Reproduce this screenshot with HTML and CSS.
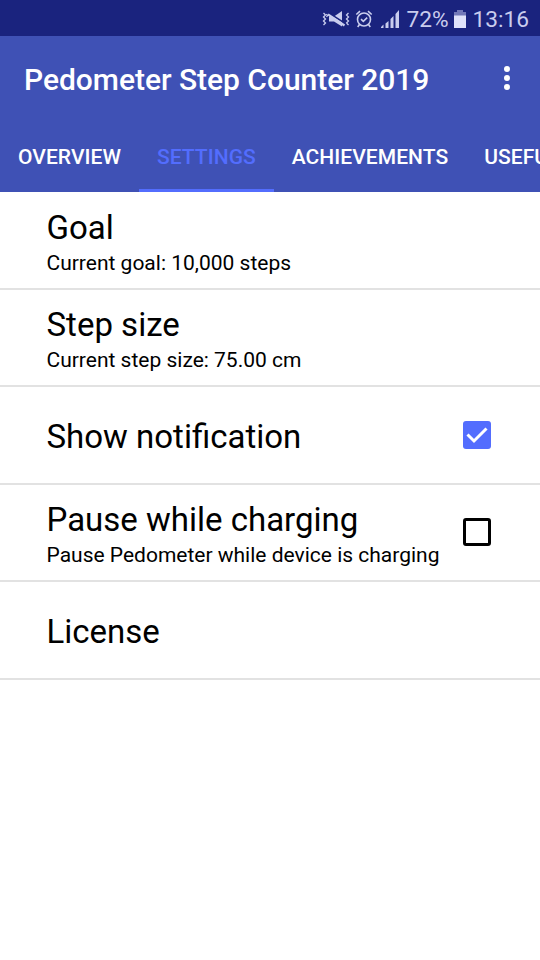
FILE: index.html
```html
<!DOCTYPE html>
<html lang="en">

<head>
    <meta charset="UTF-8">
    <meta name="viewport" content="width=device-width, initial-scale=1.0">
    <title>Pedometer Step Counter 2019</title>
    <link rel="stylesheet" href="styles.css">
</head>

<body>

    <div class="status-bar">
        <!-- Vibrate / muted -->
        <svg class="icon-mute" width="28" height="18" viewBox="0 0 28 18">
            <path d="M1.500 3l2 2-2 2 2 2-2 2 2 2-2 2M4.500 4l1 1.500-1 1.500M26.500 3l-2 2 2 2-2 2 2 2-2 2 2 2" fill="none" stroke="#c9cdee" stroke-width="1.300"/>
            <path d="M7 6.500h5L20 1v15.500L12 11.500H7z" fill="#c9cdee"/>
            <path d="M6 2.500L24 14" stroke="#1a237e" stroke-width="1.500"/>
            <path d="M6 4.300L22.500 15.500" stroke="#c9cdee" stroke-width="2.200"/>
        </svg>
        <!-- Alarm -->
        <svg class="icon-alarm" width="18" height="18" viewBox="0 0 18 18" fill="none" stroke="#c9cdee" stroke-width="1.600">
            <circle cx="9" cy="9.500" r="6.500"/>
            <path d="M1.300 4.500l3.700-3.300M16.700 4.500l-3.700-3.300M4.500 14.500l-1.800 2.500M13.500 14.500l1.800 2.500M6 9.200l2.300 2.200 3.900-3.700"/>
        </svg>
        <!-- Signal -->
        <svg class="icon-signal" width="18" height="18" viewBox="0 0 18 18" fill="#c9cdee">
            <path d="M0 17l2.500-2.500V18H0zM4.500 13.500L7.500 11v7h-3zM9.500 9l3-3v12h-3zM14.500 4L18 0v18h-3.500z"/>
        </svg>
        <span class="battery-text">72%</span>
        <!-- Battery -->
        <svg class="icon-battery" width="12" height="18" viewBox="0 0 12 18">
            <path d="M3 0h6v2h3v4H0V2h3z" fill="#7278b8"/>
            <path d="M0 5.500h12V18H0z" fill="#dfe2fa"/>
        </svg>
        <span class="clock">13:16</span>
    </div>

    <div class="app-bar">
        <div class="toolbar">
            <h1>Pedometer Step Counter 2019</h1>
            <div class="menu-button">
                <span></span>
                <span></span>
                <span></span>
            </div>
        </div>
        <div class="tabs">
            <div class="tab">OVERVIEW</div>
            <div class="tab active">SETTINGS</div>
            <div class="tab">ACHIEVEMENTS</div>
            <div class="tab">USEFUL</div>
        </div>
    </div>

    <div class="settings">
        <div class="setting">
            <div class="setting-text">
                <div class="setting-title">Goal</div>
                <div class="setting-summary">Current goal: 10,000 steps</div>
            </div>
        </div>
        <div class="setting">
            <div class="setting-text">
                <div class="setting-title">Step size</div>
                <div class="setting-summary">Current step size: 75.00 cm</div>
            </div>
        </div>
        <div class="setting">
            <div class="setting-text">
                <div class="setting-title">Show notification</div>
            </div>
            <div class="checkbox checked">
                <svg width="28" height="28" viewBox="0 0 28 28">
                    <path d="M4.500 13.500l6.500 6.500L23.500 7.500" fill="none" stroke="#fff" stroke-width="3"/>
                </svg>
            </div>
        </div>
        <div class="setting">
            <div class="setting-text">
                <div class="setting-title">Pause while charging</div>
                <div class="setting-summary">Pause Pedometer while device is charging</div>
            </div>
            <div class="checkbox"></div>
        </div>
        <div class="setting">
            <div class="setting-text">
                <div class="setting-title">License</div>
            </div>
        </div>
    </div>

</body>

</html>
```

FILE: styles.css
```css
body {
    margin: 0;
    font-family: Roboto, sans-serif;
    background-color: #fff;
    color: #000;
    overflow: hidden;
}

.status-bar {
    display: flex;
    align-items: center;
    justify-content: flex-end;
    height: 36px;
    padding: 2px 11px 0 0;
    box-sizing: border-box;
    background-color: #1a237e;
    color: #c9cdee;
    font-size: 22.7px;
    line-height: 34px;
}

.status-bar span {
    padding-top: 1px;
}

.icon-mute {
    margin-right: 5px;
}

.icon-alarm {
    margin-right: 8px;
}

.icon-signal {
    margin-right: 7px;
}

.icon-battery {
    margin: 0 7px 0 5px;
}

.app-bar {
    height: 156px;
    background-color: #3f51b5;
    color: #fff;
}

.toolbar {
    display: flex;
    align-items: center;
    justify-content: space-between;
    height: 84px;
    padding: 0 30px 0 24px;
}

.toolbar h1 {
    margin: 2px 0 0;
    font-size: 30px;
    font-weight: 500;
    letter-spacing: -0.03px;
}

.menu-button {
    display: flex;
    flex-direction: column;
    gap: 3px;
}

.menu-button span {
    width: 6px;
    height: 6px;
    border-radius: 50%;
    background-color: #fff;
}

.tabs {
    display: flex;
    height: 72px;
    overflow: hidden;
}

.tab {
    flex-shrink: 0;
    padding: 1px 18px 0;
    box-sizing: border-box;
    border-bottom: 3px solid transparent;
    font-size: 21px;
    font-weight: 500;
    letter-spacing: 0.05px;
    line-height: 72px;
}

.tab.active {
    color: #536dfe;
    border-bottom-color: #536dfe;
}

.setting {
    display: flex;
    align-items: center;
    justify-content: space-between;
    height: 97.5px;
    padding: 0 49px 0 46.5px;
    box-sizing: border-box;
    border-bottom: 2px solid #e2e2e2;
}

.setting-text {
    padding-top: 3px;
    white-space: nowrap;
}

.setting-title {
    font-size: 33px;
    line-height: 39px;
}

.setting-summary {
    font-size: 21px;
    line-height: 25px;
    padding-top: 4px;
    margin-bottom: -1px;
}

.checkbox {
    width: 28px;
    height: 28px;
    box-sizing: border-box;
    border: 3px solid #000;
    border-radius: 3px;
}

.checkbox.checked {
    border: none;
    background-color: #536dfe;
}

.checkbox svg {
    display: block;
}
```
